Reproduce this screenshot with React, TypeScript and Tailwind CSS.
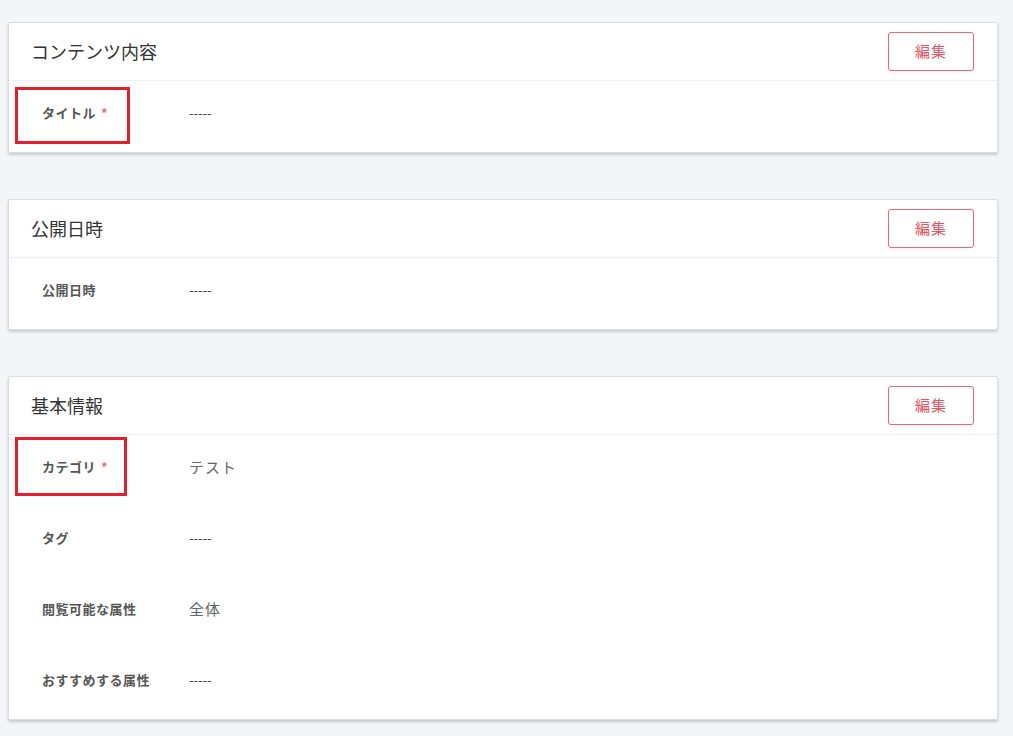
import React from "react";

type Row = { label: string; value: string; required?: boolean; big?: boolean; box?: { top: number; w: number; h: number } };

const font = { fontFamily: '"Noto Sans CJK JP", "Noto Sans", sans-serif' };

function Card({ title, rows }: { title: string; rows: Row[] }) {
  return (
    <div className="bg-white border border-[#dcdde2] rounded-[2px] shadow-[0_2px_3px_rgba(0,0,0,0.18)]">
      <div className="h-[58px] flex items-center justify-between pl-[22px] pr-[23px] border-b border-[#eeeff2]">
        <div className="text-[18px] text-[#333]">{title}</div>
        <button className="w-[86px] h-[39px] border border-[#e26a72] rounded-[3px] text-[15px] text-[#e05762] bg-white shadow-[0_1px_4px_rgba(0,0,0,0.06)] tracking-[1px]">
          編集
        </button>
      </div>
      <div>
        {rows.map((r, i) => (
          <div key={i} className="relative h-[71px] flex items-start pt-[22px]">
            <div className="w-[180px] pl-[33px] text-[13px] font-bold text-[#555] leading-[20px] tracking-[0.5px]">
              {r.label}
              {r.required && <span className="text-[#e5727c] ml-[5px]">*</span>}
            </div>
            <div className={r.big ? "text-[15px] text-[#666] leading-[20px] tracking-[1px]" : "text-[13px] text-[#444] leading-[20px]"}>
              {r.value}
            </div>
            {r.box && (
              <div
                className="absolute left-[6px] border-[3px] border-[#e3202a]"
                style={{ top: r.box.top, width: r.box.w, height: r.box.h }}
              />
            )}
          </div>
        ))}
      </div>
    </div>
  );
}

export default function App() {
  return (
    <div className="min-h-[736px] bg-[#f4f5f9] pt-[22px] pl-[8px] pr-[15px] pb-[10px] flex flex-col gap-[46px]" style={font}>
      <Card title="コンテンツ内容" rows={[{ label: "タイトル", value: "-----", required: true, box: { top: 6, w: 115, h: 57 } }]} />
      <Card title="公開日時" rows={[{ label: "公開日時", value: "-----" }]} />
      <Card
        title="基本情報"
        rows={[
          { label: "カテゴリ", value: "テスト", required: true, big: true, box: { top: 2, w: 112, h: 59 } },
          { label: "タグ", value: "-----" },
          { label: "閲覧可能な属性", value: "全体", big: true },
          { label: "おすすめする属性", value: "-----" },
        ]}
      />
    </div>
  );
}
